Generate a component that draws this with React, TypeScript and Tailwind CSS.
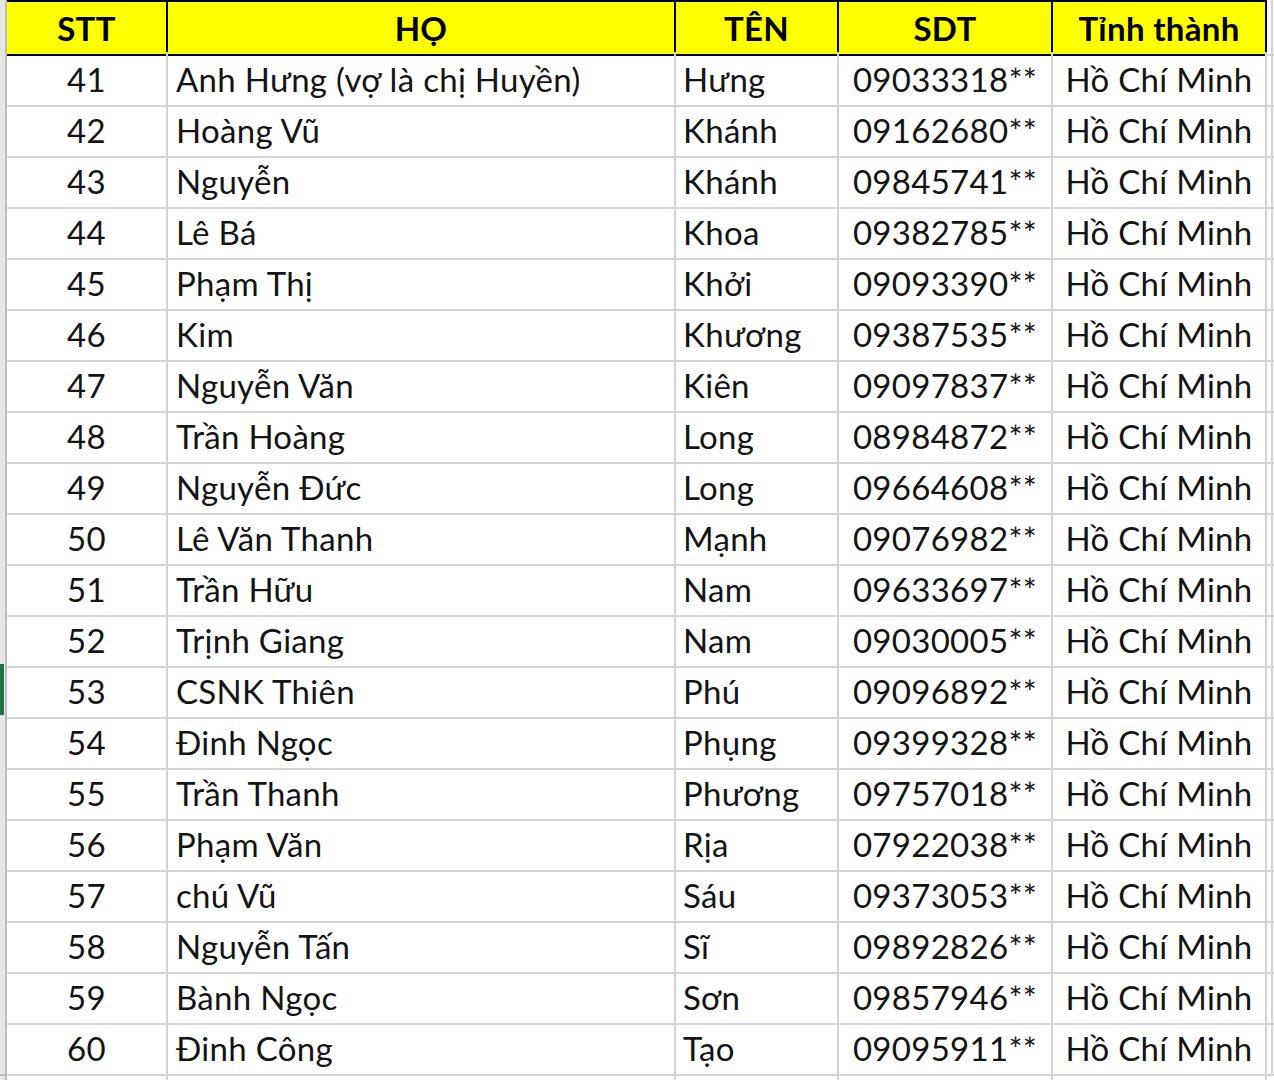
import React from 'react'

const rows: [number, string, string, string][] = [
  [41, 'Anh Hưng (vợ là chị Huyền)', 'Hưng', '09033318**'],
  [42, 'Hoàng Vũ', 'Khánh', '09162680**'],
  [43, 'Nguyễn', 'Khánh', '09845741**'],
  [44, 'Lê Bá', 'Khoa', '09382785**'],
  [45, 'Phạm Thị', 'Khởi', '09093390**'],
  [46, 'Kim', 'Khương', '09387535**'],
  [47, 'Nguyễn Văn', 'Kiên', '09097837**'],
  [48, 'Trần Hoàng', 'Long', '08984872**'],
  [49, 'Nguyễn Đức', 'Long', '09664608**'],
  [50, 'Lê Văn Thanh', 'Mạnh', '09076982**'],
  [51, 'Trần Hữu', 'Nam', '09633697**'],
  [52, 'Trịnh Giang', 'Nam', '09030005**'],
  [53, 'CSNK Thiên', 'Phú', '09096892**'],
  [54, 'Đinh Ngọc', 'Phụng', '09399328**'],
  [55, 'Trần Thanh', 'Phương', '09757018**'],
  [56, 'Phạm Văn', 'Rịa', '07922038**'],
  [57, 'chú Vũ', 'Sáu', '09373053**'],
  [58, 'Nguyễn Tấn', 'Sĩ', '09892826**'],
  [59, 'Bành Ngọc', 'Sơn', '09857946**'],
  [60, 'Đinh Công', 'Tạo', '09095911**'],
]

const cols = 'grid grid-cols-[7px_161px_508px_163px_214px_214px_1fr]'

export default function App() {
  return (
    <div className="w-[1274px] h-[1080px] overflow-hidden bg-white font-['Lato','Liberation_Sans',sans-serif] text-[33px] tracking-[0.3px] text-[#141414]">
      {/* header */}
      <div className={`${cols} h-[52px]`}>
        <div className="bg-[#e6e6e6] border-r-2 border-[#bdbdbd] border-b-2 border-b-[#bdbdbd]" />
        {['STT', 'HỌ', 'TÊN', 'SDT', 'Tỉnh thành'].map((h) => (
          <div
            key={h}
            className="bg-[#ffff00] border-t-2 border-b-2 border-r-2 border-black flex items-center justify-center pt-[2px] font-bold text-black"
          >
            {h}
          </div>
        ))}
        <div className="border-b-2 border-[#d4d4d4] pl-[3px]">
          <div className="h-full border-r-2 border-[#d4d4d4] w-[3px]" />
        </div>
      </div>

      {rows.map(([stt, ho, ten, sdt]) => (
        <div key={stt} className={`${cols} h-[51px]`}>
          <div className="bg-[#e6e6e6] border-b-2 border-r-2 border-[#bdbdbd] relative">
            {stt === 53 && <div className="absolute left-0 top-0 bottom-0 w-[4px] bg-[#217346]" />}
          </div>
          <div className="border-b-2 border-r-2 border-[#d4d4d4] flex items-center justify-center pt-[3px]">{stt}</div>
          <div className="border-b-2 border-r-2 border-[#d4d4d4] flex items-center pl-[8px] pt-[3px] whitespace-nowrap">{ho}</div>
          <div className="border-b-2 border-r-2 border-[#d4d4d4] flex items-center pl-[7px] pt-[3px] whitespace-nowrap">{ten}</div>
          <div className="border-b-2 border-r-2 border-[#d4d4d4] flex items-center justify-center pt-[3px]">{sdt}</div>
          <div className="border-b-2 border-r-2 border-[#d4d4d4] flex items-center justify-center pt-[3px]">Hồ Chí Minh</div>
          <div className="border-b-2 border-[#d4d4d4] pl-[3px]">
            <div className="h-full border-r-2 border-[#d4d4d4] w-[3px]" />
          </div>
        </div>
      ))}
      <div className={`${cols} h-[20px]`}>
        <div className="bg-[#e6e6e6] border-r-2 border-[#bdbdbd]" />
        <div className="border-r-2 border-[#d4d4d4]" />
        <div className="border-r-2 border-[#d4d4d4]" />
        <div className="border-r-2 border-[#d4d4d4]" />
        <div className="border-r-2 border-[#d4d4d4]" />
        <div className="border-r-2 border-[#d4d4d4]" />
        <div />
      </div>
    </div>
  )
}
